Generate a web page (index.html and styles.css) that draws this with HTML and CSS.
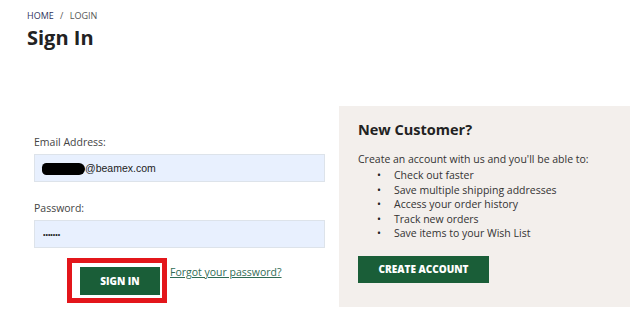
FILE: index.html
```html
<!DOCTYPE html>
<html lang="en">
<head>
  <meta charset="UTF-8" />
  <meta name="viewport" content="width=device-width, initial-scale=1.0" />
  <title>Login</title>
  <link rel="stylesheet" href="styles.css">
</head>
<body>
  <header class="page-header">
    <nav class="breadcrumb">
      <a href="#" class="crumb-home">HOME</a>
      <span class="crumb-sep">/</span>
      <span class="crumb-current">LOGIN</span>
    </nav>
    <h1>Sign In</h1>
  </header>

  <main class="login-columns">
    <form class="login-form" onsubmit="return false">
      <label for="email">Email Address:</label>
      <div class="field-wrap">
        <input type="text" id="email" class="field field-email" value="@beamex.com" />
        <span class="redacted"></span>
      </div>

      <label for="senha" class="label-password">Password:</label>
      <input type="password" id="senha" class="field field-password" value="1234567" />

      <div class="form-actions">
        <span class="highlight">
          <button type="submit" class="btn">SIGN IN</button>
        </span>
        <a href="#" class="forgot">Forgot your password?</a>
      </div>
    </form>

    <section class="new-customer">
      <h2>New Customer?</h2>
      <p>Create an account with us and you'll be able to:</p>
      <ul>
        <li>Check out faster</li>
        <li>Save multiple shipping addresses</li>
        <li>Access your order history</li>
        <li>Track new orders</li>
        <li>Save items to your Wish List</li>
      </ul>
      <button type="button" class="btn btn-create">CREATE ACCOUNT</button>
    </section>
  </main>
</body>
</html>
```

FILE: styles.css
```css
body {
  margin: 0;
  font-family: 'Open Sans', 'Liberation Sans', sans-serif;
  color: #333;
  background: #fff;
}
.page-header {
  padding: 9px 27px 0;
}
.breadcrumb {
  font-size: 9px;
  line-height: 14px;
  color: #555;
}
.crumb-home {
  color: #2f3560;
  text-decoration: none;
}
.crumb-sep {
  margin: 0 4px;
}
h1 {
  margin: 2px 0 0;
  font-size: 20px;
  line-height: 26px;
  font-weight: 700;
  color: #222;
}
.login-columns {
  display: grid;
  grid-template-columns: 291px 291px;
  gap: 14px;
  padding: 0 34px;
  margin-top: 55px;
  align-items: start;
}
.login-form {
  display: flex;
  flex-direction: column;
  padding-top: 28px;
}
.login-form label {
  font-size: 10.5px;
  line-height: 16px;
  color: #444;
  margin-bottom: 4px;
}
.label-password {
  margin-top: 18px;
}
.field-wrap {
  position: relative;
}
.field {
  box-sizing: border-box;
  width: 100%;
  height: 28px;
  background: #e8f0fe;
  border: 1px solid #dde3ea;
  padding: 0 8px;
  font-family: 'Liberation Sans', Arial, sans-serif;
  font-size: 10.5px;
  color: #222;
  outline: none;
}
.field-email {
  padding-left: 50px;
}
.redacted {
  position: absolute;
  left: 8px;
  top: 9px;
  width: 43px;
  height: 12px;
  background: #000;
  border-radius: 6px 8px 8px 6px;
}
.field-password {
  font-size: 7px;
  letter-spacing: 0;
}
.form-actions {
  display: flex;
  align-items: flex-start;
  margin-top: 10px;
  padding-left: 33px;
}
.highlight {
  display: inline-block;
  border: 5px solid #e3161b;
  padding: 4px 2px 3px 8px;
}
.btn {
  display: block;
  background: #1a5e38;
  color: #fff;
  border: none;
  font-family: 'Open Sans', 'Liberation Sans', sans-serif;
  font-weight: 800;
  font-size: 10px;
  cursor: pointer;
}
.highlight .btn {
  width: 80px;
  height: 28px;
}
.forgot {
  margin: 7px 0 0 3px;
  font-size: 10.5px;
  line-height: 14px;
  color: #2f6b55;
}
.new-customer {
  background: #f3efec;
  padding: 14px 19px 24px;
}
h2 {
  margin: 0;
  font-size: 14.5px;
  line-height: 20px;
  font-weight: 700;
  color: #222;
}
.new-customer p {
  margin: 12px 0 0;
  font-size: 10.5px;
  line-height: 14px;
}
.new-customer ul {
  list-style: none;
  margin: 2px 0 0;
  padding-left: 19px;
}
.new-customer li {
  font-size: 10.5px;
  line-height: 14.5px;
}
.new-customer li::before {
  content: "•";
  display: inline-block;
  width: 17px;
  color: #222;
}
.btn-create {
  margin-top: 15px;
  width: 131px;
  height: 27px;
}
```
